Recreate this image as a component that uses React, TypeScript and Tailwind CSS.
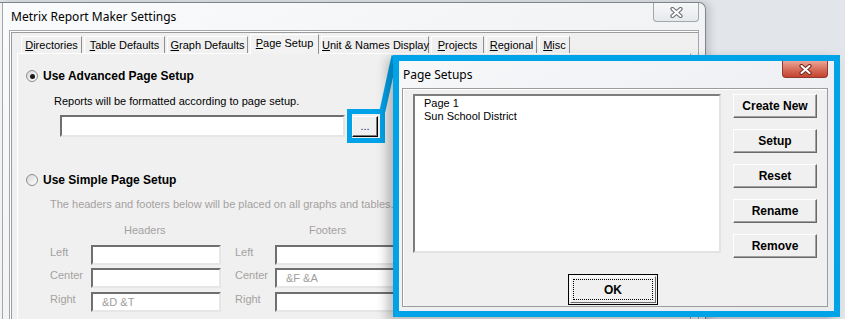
import React from 'react';

const ui = { fontFamily: "'Liberation Sans', Arial, sans-serif" };
const seg = { fontFamily: "'Noto Sans', 'Open Sans', sans-serif" };

const tabs = [
  { k: 'D', rest: 'irectories', w: 'w-[61px]' },
  { k: 'T', rest: 'able Defaults', w: 'w-[81px]' },
  { k: 'G', rest: 'raph Defaults', w: 'w-[81px]' },
  { k: 'P', rest: 'age Setup', w: 'w-[69px]', active: true },
  { k: 'U', rest: 'nit & Names Display', w: 'w-[108px]' },
  { k: 'P', rest: 'rojects', w: 'w-[53px]' },
  { k: 'R', rest: 'egional', w: 'w-[51px]' },
  { k: 'M', rest: 'isc', w: 'w-[31px]' },
];

const Radio = ({ checked }: { checked?: boolean }) => (
  <div className="w-[12px] h-[12px] rounded-full border border-[#8b8d90] bg-gradient-to-br from-[#d6d7d9] to-white flex items-center justify-center">
    {checked && <div className="w-[5px] h-[5px] rounded-full bg-[#1a1a1a]" />}
  </div>
);

const Field = ({ value, w = 'w-[130px]', h = 'h-[20px]' }: { value?: string; w?: string; h?: string }) => (
  <div
    className={`${w} ${h} bg-white border-2 border-t-[#6f6f6f] border-l-[#6f6f6f] border-b-[#e6e6e6] border-r-[#e6e6e6] pl-[9px] text-[11px] leading-[16px] text-[#9d9d9d]`}
  >
    {value}
  </div>
);

const XGlyph = ({ outline, fill }: { outline: string; fill: string }) => (
  <svg width="15" height="11" viewBox="0 0 15 11">
    <path d="M3.5 2 L11.5 9 M11.5 2 L3.5 9" stroke={outline} strokeWidth="4.2" strokeLinecap="round" />
    <path d="M3.5 2 L11.5 9 M11.5 2 L3.5 9" stroke={fill} strokeWidth="2" strokeLinecap="round" />
  </svg>
);

const SideButton = ({ label }: { label: string }) => (
  <div className="w-[84px] h-[24px] bg-[#f0f0f0] border border-t-white border-l-white border-r-[#696969] border-b-[#696969] shadow-[inset_-1px_-1px_0_#a0a0a0] flex items-center justify-center text-[12px] font-bold text-black">
    {label}
  </div>
);

export default function App() {
  return (
    <div className="relative w-[845px] h-[319px] overflow-hidden bg-[#e2e5ea]" style={ui}>
      {/* main settings window */}
      <div className="mt-[2px] w-[706px] h-[330px] rounded-tr-[7px] border-t border-r border-[#80858c] bg-gradient-to-br from-[#fafbfc] via-[#f1f3f5] to-[#eceff2] shadow-[3px_0_10px_rgba(0,0,0,0.18),inset_2px_0_0_#f3f3f3,inset_3px_0_0_#a4a8ad] flex flex-col">
        <div className="h-[27px] flex justify-between">
          <div className="pl-[11px] pt-[5px] text-[12px] text-black" style={seg}>
            Metrix Report Maker Settings
          </div>
          <div className="mr-[6px] w-[46px] h-[19px] rounded-b-[4px] border border-t-0 border-[#a3a8ae] bg-gradient-to-b from-[#f6f7f8] to-[#e6e9ec] flex items-center justify-center">
            <XGlyph outline="#6b7078" fill="#ffffff" />
          </div>
        </div>

        {/* client area */}
        <div className="ml-[9px] mr-[6px] flex-1 border border-[#a6a6a6] shadow-[inset_1px_1px_0_#ffffff,inset_2px_2px_0_#9c9c9c] bg-[#f0f0f0] pt-[2px] px-[7px] flex flex-col">
          <div className="h-[20px] pl-[4px] flex items-end gap-[2px]">
            {tabs.map((t, i) => (
              <div
                key={i}
                className={`${t.w} ${
                  t.active ? 'h-[20px] -mb-px relative z-10 bg-[#f2f2f2] leading-[17px]' : 'h-[17px] bg-[#f0f0f0] leading-[16px]'
                } shrink-0 whitespace-nowrap border-l border-t border-white border-r border-r-[#8f8f8f] text-[11px] text-center text-black`}
              >
                <span className="underline">{t.k}</span>
                {t.rest}
              </div>
            ))}
          </div>

          {/* tab page */}
          <div className="flex-1 border-l border-t border-white border-r border-r-[#a0a0a0] bg-[#f0f0f0] pl-[8px] pt-[15px] flex flex-col">
            <div className="h-[14px] flex items-center gap-[5px]">
              <Radio checked />
              <span className="text-[12px] font-bold text-black">Use Advanced Page Setup</span>
            </div>
            <div className="mt-[11px] ml-[28px] h-[14px] text-[11px] leading-[14px] text-black">
              Reports will be formatted according to page setup.
            </div>
            <div className="mt-[7px] ml-[34px] flex items-start gap-[7px]">
              <Field w="w-[285px]" h="h-[22px]" />
              <div className="mt-[1px] w-[26px] h-[21px] bg-[#f0f0f0] border border-t-white border-l-white border-r-black border-b-black shadow-[inset_-1px_-1px_0_#7a7a7a] flex items-center justify-center text-[11px] leading-none text-[#1c1c5c]">
                ...
              </div>
            </div>

            <div className="mt-[36px] h-[14px] flex items-center gap-[5px]">
              <Radio />
              <span className="text-[12px] font-bold text-black">Use Simple Page Setup</span>
            </div>
            <div className="mt-[10px] ml-[24px] h-[14px] text-[11px] leading-[14px] text-[#a5a1a1]">
              The headers and footers below will be placed on all graphs and tables.
            </div>

            <div className="mt-[12px] ml-[24px] grid grid-cols-[41px_130px_14px_40px_130px] gap-y-[3.5px] text-[11px] text-[#a5a1a1]">
              <div />
              <div className="pl-[33px] h-[14px] leading-[14px] mb-[4px]">Headers</div>
              <div />
              <div />
              <div className="pl-[34px] h-[14px] leading-[14px] mb-[4px]">Footers</div>

              <div className="leading-[14px]">Left</div>
              <Field />
              <div />
              <div className="leading-[14px]">Left</div>
              <Field />

              <div className="leading-[14px]">Center</div>
              <Field />
              <div />
              <div className="leading-[14px]">Center</div>
              <Field value="&F &A" />

              <div className="leading-[14px]">Right</div>
              <Field value="&D &T" />
              <div />
              <div className="leading-[14px]">Right</div>
              <Field />
            </div>
          </div>
        </div>
      </div>

      {/* callout from the ... button to the dialog */}
      <svg className="absolute left-0 top-0 pointer-events-none" width="845" height="319">
        <rect x="349.5" y="111.5" width="33" height="29" fill="none" stroke="#00a2e8" strokeWidth="5" />
        <line x1="382.5" y1="111" x2="394.5" y2="56" stroke="#00a2e8" strokeWidth="6" />
      </svg>

      {/* Page Setups dialog */}
      <div className="absolute left-[393px] top-[55px] w-[447px] h-[262px] border-[6px] border-[#00a2e8] shadow-[-6px_4px_10px_rgba(0,0,0,0.25)] bg-gradient-to-br from-[#f7f8fa] via-[#eef0f3] to-[#e8ebee] flex flex-col">
        <div className="h-[27px] flex justify-between">
          <div className="pl-[4px] pt-[5px] text-[12px] text-black" style={seg}>
            Page Setups
          </div>
          <div className="mr-[6px] w-[46px] h-[17px] rounded-b-[4px] border border-t-0 border-[#8e3b2f] bg-gradient-to-b from-[#e9a597] via-[#d7705f] to-[#c5412e] flex items-center justify-center">
            <XGlyph outline="#7a2b20" fill="#ffffff" />
          </div>
        </div>
        <div className="ml-[3px] mr-[6px] mb-[4px] flex-1 border border-[#9c9c9c] shadow-[inset_1px_1px_0_#ffffff] bg-[#f0f0f0] flex flex-col">
          <div className="flex pt-[5px] pl-[10px]">
            <div className="w-[308px] h-[159px] bg-white border-2 border-t-[#7d7d7d] border-l-[#7d7d7d] border-b-[#e3e3e3] border-r-[#e3e3e3] pl-[9px] pt-[1px] text-[11px] leading-[13px] text-black">
              <div>Page 1</div>
              <div>Sun School District</div>
            </div>
            <div className="ml-[12px] flex flex-col gap-[11px]">
              <SideButton label="Create New" />
              <SideButton label="Setup" />
              <SideButton label="Reset" />
              <SideButton label="Rename" />
              <SideButton label="Remove" />
            </div>
          </div>
          <div className="mt-[16px] ml-[165px] w-[90px] h-[31px] border border-black bg-[#f0f0f0] p-[1px]">
            <div className="w-full h-full border border-t-white border-l-white border-r-[#696969] border-b-[#696969] p-[2px]">
              <div className="w-full h-full border border-dotted border-black flex items-center justify-center text-[12px] font-bold text-black">
                OK
              </div>
            </div>
          </div>
        </div>
      </div>
    </div>
  );
}
